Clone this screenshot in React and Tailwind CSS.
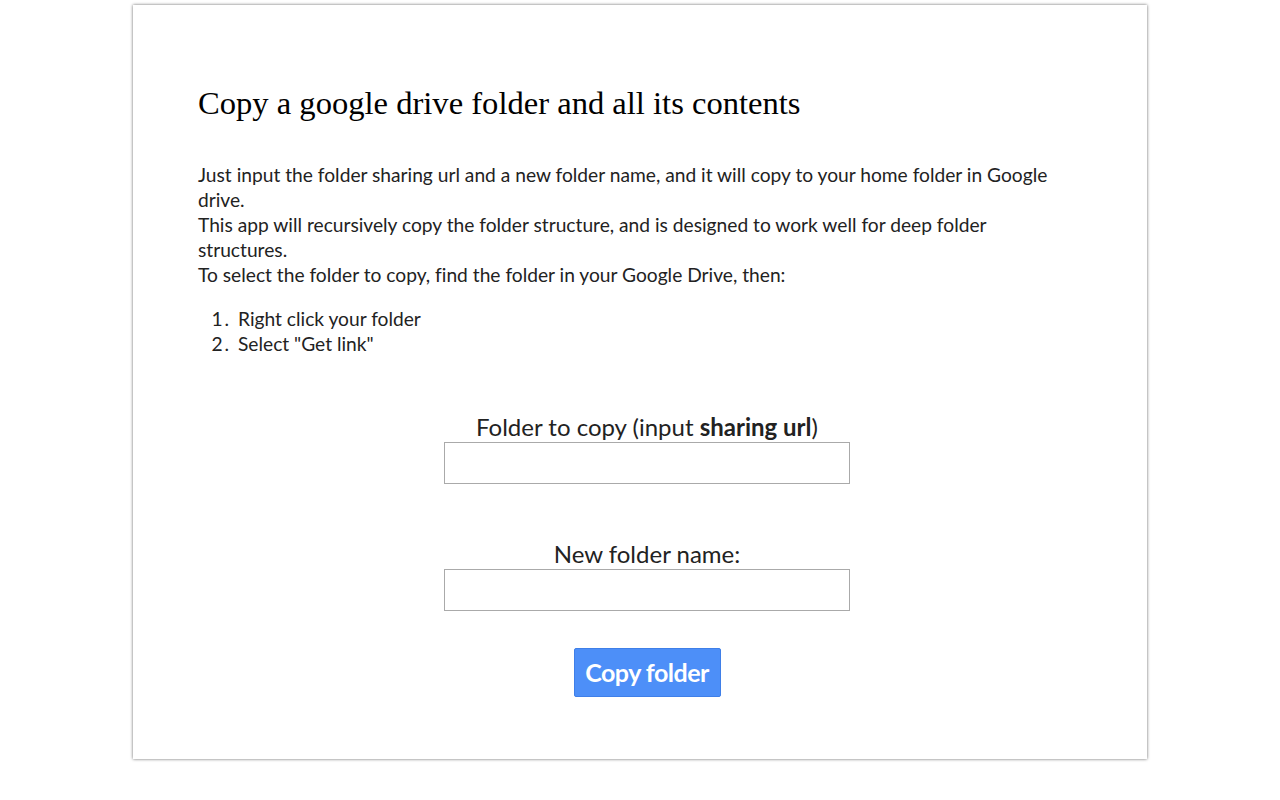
import React from 'react';

const App = () => {
  return (
    <div className="min-h-[800px] bg-white pt-[5px] font-['Lato',sans-serif] text-[#222]">
      <div className="mx-auto w-[1014px] h-[754px] bg-white shadow-[0_0_3px_rgba(0,0,0,0.6)] px-[65px] pt-[78px]">
        <h1 className="font-['Liberation_Serif',serif] text-[32.6px] leading-[40px] text-black">
          Copy a google drive folder and all its contents
        </h1>

        <div className="mt-[39px] pr-[14px] text-[19.2px] leading-[25px] [font-variant-ligatures:none]">
          <p>
            Just input the folder sharing url and a new folder name, and it will copy to your home folder in Google
            drive.
            <br />
            This app will recursively copy the folder structure, and is designed to work well for deep folder
            structures.
            <br />
            To select the folder to copy, find the folder in your Google Drive, then:
          </p>
          <ol className="mt-[19px] list-decimal pl-[40px] marker:tracking-[2px]">
            <li>Right click your folder</li>
            <li>Select "Get link"</li>
          </ol>
        </div>

        <div className="mt-[57px] pl-[14px] flex flex-col items-center">
          <label className="text-[24px] leading-[28px]">
            Folder to copy (input <b>sharing url</b>)
          </label>
          <input type="text" className="mt-[1px] w-[406px] h-[42px] border border-[#aaa] bg-white" />

          <label className="mt-[56px] text-[24px] leading-[28px]">New folder name:</label>
          <input type="text" className="mt-[1px] w-[406px] h-[42px] border border-[#aaa] bg-white" />

          <button className="mt-[37px] w-[147px] h-[49px] rounded-[2px] border border-[#3f7fe8] bg-[#4d8ff8] text-white text-[25px] font-bold tracking-[-0.5px]">
            Copy folder
          </button>
        </div>
      </div>
    </div>
  );
};

export default App;
